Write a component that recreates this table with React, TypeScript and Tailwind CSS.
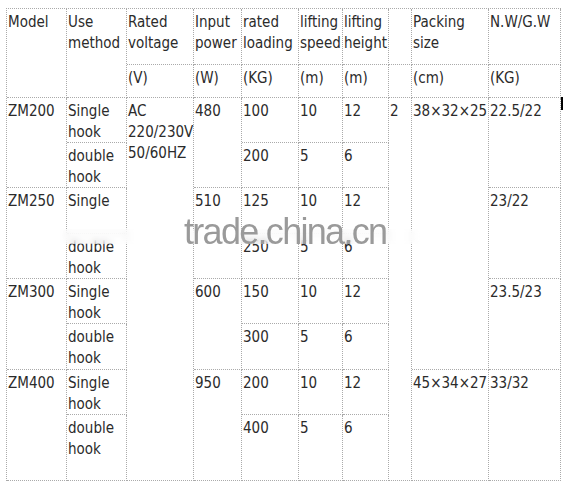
import type { ReactNode } from 'react';

interface CellProps {
  className: string;
  children?: ReactNode;
}

function Cell({ className, children }: CellProps) {
  return (
    <div
      className={`border-r border-b border-dotted border-[#aaaaaa] px-[1px] pt-[3px] whitespace-nowrap overflow-visible ${className}`}
    >
      {children}
    </div>
  );
}

export default function App() {
  return (
    <div className="relative w-[567px] h-[482px] bg-white overflow-hidden pt-[8px] pl-[6px]">
      <div
        className="grid w-max border-l border-t border-dotted border-[#aaaaaa] text-[15px] leading-[21px] text-[#2b2b2b] font-stretch-condensed grid-cols-[60px_60px_67px_48px_57px_44px_46px_23px_77px_72px] grid-rows-[56px_33px_45px_45px_46px_45px_45px_46px_45px_66px]"
        style={{ fontFamily: '"DejaVu Sans Condensed", "DejaVu Sans", sans-serif' }}
      >
        {/* header */}
        <Cell className="col-start-1 row-start-1 row-span-2">Model</Cell>
        <Cell className="col-start-2 row-start-1 row-span-2">Use<br />method</Cell>
        <Cell className="col-start-3 row-start-1">Rated<br />voltage</Cell>
        <Cell className="col-start-4 row-start-1">Input<br />power</Cell>
        <Cell className="col-start-5 row-start-1">rated<br />loading</Cell>
        <Cell className="col-start-6 row-start-1">lifting<br />speed</Cell>
        <Cell className="col-start-7 row-start-1">lifting<br />height</Cell>
        <Cell className="col-start-8 row-start-1" />
        <Cell className="col-start-9 row-start-1">Packing<br />size</Cell>
        <Cell className="col-start-10 row-start-1">N.W/G.W</Cell>

        <Cell className="col-start-3 row-start-2">(V)</Cell>
        <Cell className="col-start-4 row-start-2">(W)</Cell>
        <Cell className="col-start-5 row-start-2">(KG)</Cell>
        <Cell className="col-start-6 row-start-2">(m)</Cell>
        <Cell className="col-start-7 row-start-2">(m)</Cell>
        <Cell className="col-start-8 row-start-2" />
        <Cell className="col-start-9 row-start-2">(cm)</Cell>
        <Cell className="col-start-10 row-start-2">(KG)</Cell>

        {/* model */}
        <Cell className="col-start-1 row-start-3 row-span-2">ZM200</Cell>
        <Cell className="col-start-1 row-start-5 row-span-2">ZM250</Cell>
        <Cell className="col-start-1 row-start-7 row-span-2">ZM300</Cell>
        <Cell className="col-start-1 row-start-9 row-span-2">ZM400</Cell>

        {/* use method */}
        <Cell className="col-start-2 row-start-3">Single<br />hook</Cell>
        <Cell className="col-start-2 row-start-4">double<br />hook</Cell>
        <Cell className="col-start-2 row-start-5">Single</Cell>
        <Cell className="col-start-2 row-start-6">double<br />hook</Cell>
        <Cell className="col-start-2 row-start-7">Single<br />hook</Cell>
        <Cell className="col-start-2 row-start-8">double<br />hook</Cell>
        <Cell className="col-start-2 row-start-9">Single<br />hook</Cell>
        <Cell className="col-start-2 row-start-10">double<br />hook</Cell>

        {/* voltage */}
        <Cell className="col-start-3 row-start-3 row-span-8">AC<br />220/230V<br />50/60HZ</Cell>

        {/* input power */}
        <Cell className="col-start-4 row-start-3 row-span-2">480</Cell>
        <Cell className="col-start-4 row-start-5 row-span-2">510</Cell>
        <Cell className="col-start-4 row-start-7 row-span-2">600</Cell>
        <Cell className="col-start-4 row-start-9 row-span-2">950</Cell>

        {/* rated loading */}
        <Cell className="col-start-5 row-start-3">100</Cell>
        <Cell className="col-start-5 row-start-4">200</Cell>
        <Cell className="col-start-5 row-start-5">125</Cell>
        <Cell className="col-start-5 row-start-6">250</Cell>
        <Cell className="col-start-5 row-start-7">150</Cell>
        <Cell className="col-start-5 row-start-8">300</Cell>
        <Cell className="col-start-5 row-start-9">200</Cell>
        <Cell className="col-start-5 row-start-10">400</Cell>

        {/* lifting speed */}
        <Cell className="col-start-6 row-start-3">10</Cell>
        <Cell className="col-start-6 row-start-4">5</Cell>
        <Cell className="col-start-6 row-start-5">10</Cell>
        <Cell className="col-start-6 row-start-6">5</Cell>
        <Cell className="col-start-6 row-start-7">10</Cell>
        <Cell className="col-start-6 row-start-8">5</Cell>
        <Cell className="col-start-6 row-start-9">10</Cell>
        <Cell className="col-start-6 row-start-10">5</Cell>

        {/* lifting height */}
        <Cell className="col-start-7 row-start-3">12</Cell>
        <Cell className="col-start-7 row-start-4">6</Cell>
        <Cell className="col-start-7 row-start-5">12</Cell>
        <Cell className="col-start-7 row-start-6">6</Cell>
        <Cell className="col-start-7 row-start-7">12</Cell>
        <Cell className="col-start-7 row-start-8">6</Cell>
        <Cell className="col-start-7 row-start-9">12</Cell>
        <Cell className="col-start-7 row-start-10">6</Cell>

        <Cell className="col-start-8 row-start-3 row-span-8">2</Cell>

        {/* packing */}
        <Cell className="col-start-9 row-start-3 row-span-6">38×32×25</Cell>
        <Cell className="col-start-9 row-start-9 row-span-2">45×34×27</Cell>

        {/* weight */}
        <Cell className="col-start-10 row-start-3 row-span-2">22.5/22</Cell>
        <Cell className="col-start-10 row-start-5 row-span-2">23/22</Cell>
        <Cell className="col-start-10 row-start-7 row-span-2">23.5/23</Cell>
        <Cell className="col-start-10 row-start-9 row-span-2">33/32</Cell>
      </div>

      {/* watermark */}
      <div className="absolute left-[60px] top-[229px] w-[360px] h-[15px] bg-white/40 backdrop-blur-[3px]" />
      <div
        className="absolute left-[184px] top-[214px] text-[36px] leading-none tracking-[-1.7px] text-[#9a9a9a] whitespace-nowrap"
        style={{ fontFamily: '"Liberation Sans", Arial, sans-serif' }}
      >
        trade.china.cn
      </div>

      {/* cursor mark */}
      <div className="absolute left-[561px] top-[97px] w-[2px] h-[13px] bg-black" />
    </div>
  );
}
